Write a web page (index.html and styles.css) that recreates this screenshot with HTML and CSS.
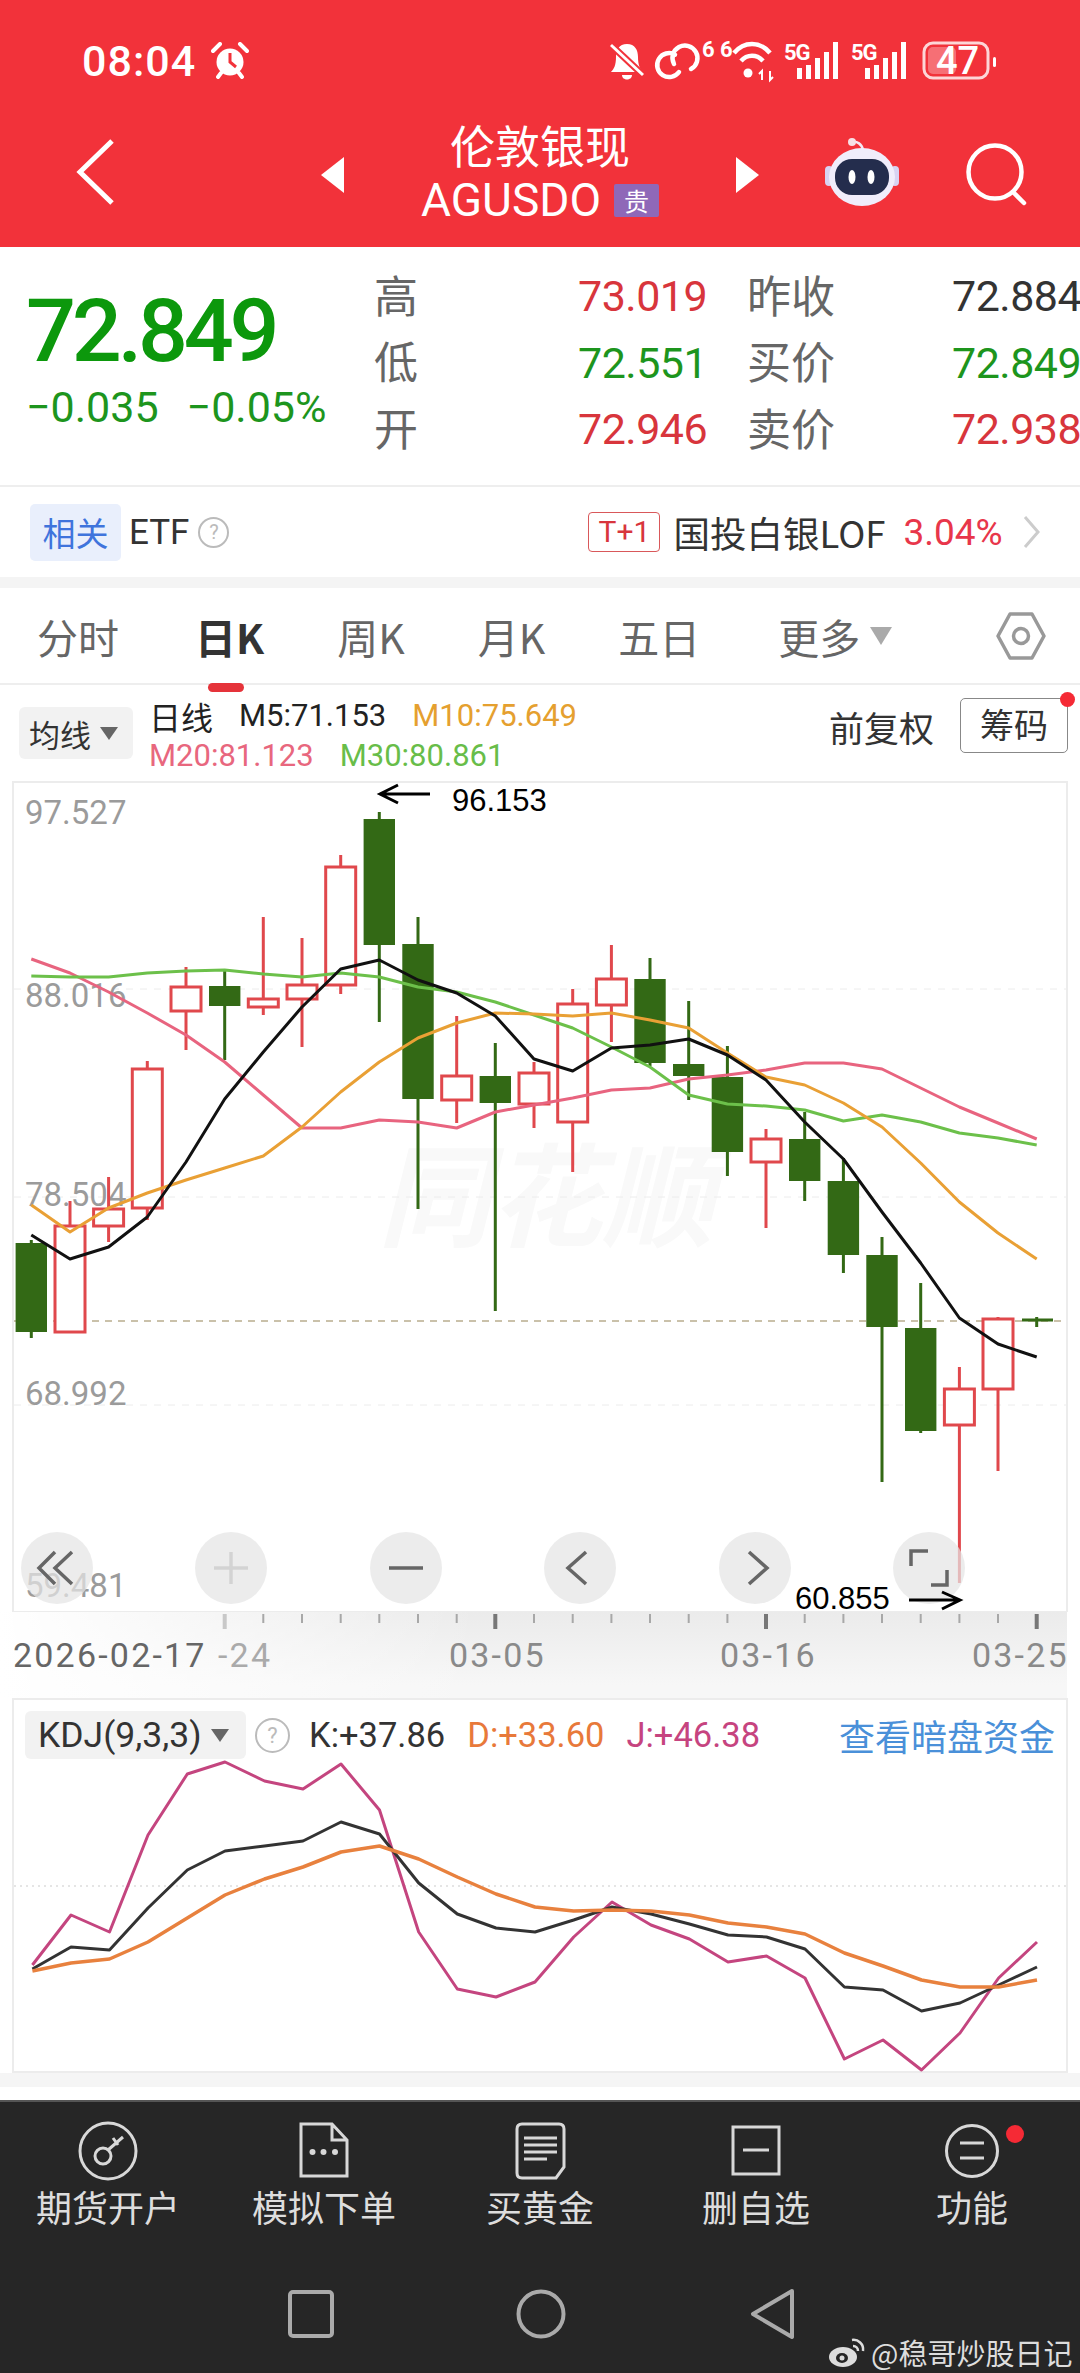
FILE: index.html
```html
<!DOCTYPE html>
<html lang="zh-CN">
<head>
    <meta charset="UTF-8">
    <meta name="viewport" content="width=device-width, initial-scale=1.0">
    <title>伦敦银现 AGUSDO</title>
    <link rel="stylesheet" href="styles.css">
</head>
<body>
    <header class="topbar">
        <div class="status">
            <div class="clock">
                <span class="time">08:04</span>
                <svg class="alarm" viewBox="0 0 38 38" width="38" height="38">
                    <circle cx="19" cy="20" r="13.5" fill="#fff"/>
                    <path d="M19 11V20L25 25" fill="none" stroke="#f2323a" stroke-width="3"/>
                    <path d="M2 9L9 2M36 9L29 2M7 35L10 31M31 35L28 31" stroke="#fff" stroke-width="4" stroke-linecap="round"/>
                </svg>
            </div>
            <svg class="status-icons" viewBox="605 38 395 46" width="395" height="46">
                <path d="M629 44C621 44 618 50 618 57C618 65 616 69 613 72H645C642 69 640 65 640 57C640 50 637 44 629 44ZM624 75H634C634 81 624 81 624 75Z" fill="#fff"/>
                <path d="M613 45L645 75" stroke="#f2323a" stroke-width="7"/>
                <path d="M613 45L645 75" stroke="#fff" stroke-width="3"/>
                <path d="M677 54.6A12 12 0 1 0 681 72M676 64A12.5 12.5 0 1 1 693 69" fill="none" stroke="#fff" stroke-width="4.5" stroke-linecap="round"/>
                <text class="tiny-six" x="704" y="57">6</text>
                <text class="tiny-six" x="722" y="57">6</text>
                <path d="M736 53C746 41 762 41 772 53M743 61C749 54 759 54 765 61" fill="none" stroke="#fff" stroke-width="4.5"/>
                <circle cx="750" cy="73" r="4.5" fill="#fff"/>
                <path d="M764 80V71L761 74M772 71V80L775 77" fill="none" stroke="#fff" stroke-width="2"/>
                <text class="five-g" x="786" y="60">5G</text>
                <path d="M799 68h5v11h-5zM808 65h5v14h-5zM817 58h5v21h-5zM826 52h5v27h-5zM835 42h5v37h-5z" fill="#fff"/>
                <text class="five-g" x="853" y="60">5G</text>
                <path d="M867 68h5v11h-5zM876 65h5v14h-5zM885 58h5v21h-5zM894 52h5v27h-5zM903 42h5v37h-5z" fill="#fff"/>
                <rect x="926" y="43" width="64" height="35" rx="9" fill="none" stroke="#fff" stroke-opacity="0.8" stroke-width="3"/>
                <rect x="930" y="47" width="28" height="27" rx="5" fill="#fff" fill-opacity="0.3"/>
                <text class="battery-num" x="938" y="74">47</text>
                <rect x="995" y="57" width="3" height="10" rx="1.5" fill="#fff"/>
            </svg>
        </div>
        <nav class="titlebar">
            <svg class="back" viewBox="0 0 44 70" width="44" height="70">
                <path d="M36 4L4 35L36 66" fill="none" stroke="#fff" stroke-width="5"/>
            </svg>
            <div class="switcher">
                <span class="tri-left"></span>
                <div class="product">
                    <div class="product-name">伦敦银现</div>
                    <div class="product-code">AGUSDO<span class="exchange">贵</span></div>
                </div>
                <span class="tri-right"></span>
            </div>
            <svg class="robot" viewBox="820 136 82 72" width="82" height="72">
                <path d="M851 142C856 141 861 144 862 150" fill="none" stroke="#f3e9f4" stroke-width="2.5"/>
                <circle cx="851" cy="142" r="4" fill="#f7dfe6"/>
                <rect x="824" y="166" width="8" height="20" rx="4" fill="#d8d2f2"/>
                <rect x="890" y="166" width="8" height="20" rx="4" fill="#d8d2f2"/>
                <ellipse cx="861" cy="177" rx="33" ry="29" fill="#f0edfb"/>
                <rect x="834" y="159" width="54" height="36" rx="17" fill="#242d4d"/>
                <ellipse cx="851" cy="177" rx="3.5" ry="7" fill="#fff"/>
                <ellipse cx="870" cy="177" rx="3.5" ry="7" fill="#fff"/>
            </svg>
            <svg class="search" viewBox="960 140 70 70" width="70" height="70">
                <circle cx="994" cy="172" r="26.5" fill="none" stroke="#fff" stroke-width="4.5"/>
                <path d="M1012 192L1023 203" stroke="#fff" stroke-width="4.5" stroke-linecap="round"/>
            </svg>
        </nav>
    </header>

    <section class="quote">
        <div class="last">
            <div class="last-price">72.849</div>
            <div class="last-change"><span>−0.035</span><span>−0.05%</span></div>
        </div>
        <div class="stats">
            <span class="stat-label">高</span><span class="stat-value red">73.019</span><span class="stat-label">昨收</span><span class="stat-value dark">72.884</span>
            <span class="stat-label">低</span><span class="stat-value green">72.551</span><span class="stat-label">买价</span><span class="stat-value green">72.849</span>
            <span class="stat-label">开</span><span class="stat-value red">72.946</span><span class="stat-label">卖价</span><span class="stat-value red">72.938</span>
        </div>
    </section>

    <section class="etf">
        <span class="etf-tag">相关</span>
        <span class="etf-title">ETF</span>
        <span class="help etf-help">?</span>
        <span class="t1">T+1</span>
        <span class="etf-name">国投白银LOF</span>
        <span class="etf-rate">3.04%</span>
        <svg class="etf-more" viewBox="0 0 18 34" width="18" height="34">
            <path d="M2 2L15 17L2 32" fill="none" stroke="#ccc" stroke-width="3"/>
        </svg>
    </section>

    <div class="gap"></div>

    <section class="tabs">
        <span class="tab tab-first">分时</span>
        <span class="tab tab-on">日K</span>
        <span class="tab">周K</span>
        <span class="tab">月K</span>
        <span class="tab">五日</span>
        <span class="tab tab-more">更多<i class="tab-arrow"></i></span>
        <svg class="tab-set" viewBox="0 0 50 48" width="50" height="48">
            <path d="M14 2H36L48 24L36 46H14L2 24Z" fill="none" stroke="#999" stroke-width="3.5" stroke-linejoin="round"/>
            <circle cx="25" cy="24" r="7.5" fill="none" stroke="#999" stroke-width="3.5"/>
        </svg>
    </section>

    <section class="legend">
        <div class="ma-select">均线<i class="small-arrow"></i></div>
        <div class="ma-values">
            <div class="ma-line"><span class="ma-name">日线</span><span class="m5">M5:71.153</span><span class="m10">M10:75.649</span></div>
            <div class="ma-line"><span class="m20">M20:81.123</span><span class="m30">M30:80.861</span></div>
        </div>
        <span class="adjust">前复权</span>
        <span class="chips">筹码<i class="dot chips-dot"></i></span>
    </section>

    <section class="chart">
        <svg class="plot" viewBox="0 781 1080 831" width="1080" height="831">
            <rect class="frame" x="13" y="782" width="1054" height="830"/>
            <text class="watermark" x="378" y="1238">同花顺</text>
            <path class="grid" d="M14 989H1066M14 1197H1066M14 1405H1066"/>
            <path class="price-line" d="M14 1321H1066"/>
            <text class="y-num" x="25" y="824">97.527</text>
            <text class="y-num" x="25" y="1007">88.016</text>
            <text class="y-num" x="25" y="1206">78.504</text>
            <text class="y-num" x="25" y="1405">68.992</text>
            <text class="y-num" x="25" y="1597">59.481</text>

            <path class="wick-dn" d="M31.3 1240V1338M224.7 969V1060M379.3 812V1022M418 917V1209M495.3 1043V1311M650 958V1066M688.7 1001V1100M727.4 1046V1176M804.7 1112V1201M843.4 1158V1273M882 1237V1482M920.7 1283V1433"/>
            <path class="wick-up" d="M70 1201V1226M108.6 1177V1242M147.3 1061V1220M186 967V1050M263.3 917V1015M302 938V1047M340.7 855V994M456.7 1016V1123M534 1062V1128M572.7 989V1172M611.4 945V1042M766 1129V1228M959.4 1367V1583M998 1317V1471"/>

            <rect class="dn" x="15.6" y="1243" width="31.4" height="89"/>
            <rect class="dn" x="209" y="986" width="31.4" height="20"/>
            <rect class="dn" x="363.6" y="819" width="31.4" height="126"/>
            <rect class="dn" x="402.3" y="944" width="31.4" height="155"/>
            <rect class="dn" x="479.6" y="1076" width="31.4" height="27"/>
            <rect class="dn" x="634.3" y="979" width="31.4" height="84"/>
            <rect class="dn" x="673" y="1064" width="31.4" height="12"/>
            <rect class="dn" x="711.7" y="1077" width="31.4" height="75"/>
            <rect class="dn" x="789" y="1139" width="31.4" height="42"/>
            <rect class="dn" x="827.7" y="1181" width="31.4" height="74"/>
            <rect class="dn" x="866.3" y="1255" width="31.4" height="72"/>
            <rect class="dn" x="905" y="1328" width="31.4" height="103"/>
            <path class="wick-dn thin" d="M1022 1320H1053M1036.7 1317V1327"/>

            <rect class="up" x="55" y="1226" width="30" height="106"/>
            <rect class="up" x="93.6" y="1209" width="30" height="17"/>
            <rect class="up" x="132.3" y="1069" width="30" height="139"/>
            <rect class="up" x="171" y="987" width="30" height="24"/>
            <rect class="up" x="248.3" y="999" width="30" height="8"/>
            <rect class="up" x="287" y="985" width="30" height="14"/>
            <rect class="up" x="325.7" y="867" width="30" height="118"/>
            <rect class="up" x="441.7" y="1076" width="30" height="24"/>
            <rect class="up" x="519" y="1073" width="30" height="31"/>
            <rect class="up" x="557.7" y="1004" width="30" height="118"/>
            <rect class="up" x="596.4" y="979" width="30" height="26"/>
            <rect class="up" x="751" y="1139" width="30" height="23"/>
            <rect class="up" x="944.4" y="1389" width="30" height="36"/>
            <rect class="up" x="983" y="1319" width="30" height="70"/>

            <polyline class="ma ma20" points="31.3,959 70,973 108.6,992 147.3,1013 186,1035 224.7,1062 263.3,1095 302,1128 340.7,1128 379.3,1120 418,1122 456.7,1128 495.3,1112 534,1105 572.7,1098 611.4,1090 650,1088 688.7,1079 727.4,1075 766,1070 804.7,1063 843.4,1063 882,1069 920.7,1088 959.4,1107 998,1123 1036.7,1139"/>
            <polyline class="ma ma30" points="31.3,976 70,977 108.6,977 147.3,973 186,971 224.7,970 263.3,974 302,977 340.7,973 379.3,977 418,987 456.7,992 495.3,1002 534,1015 572.7,1028 611.4,1047 650,1067 688.7,1095 727.4,1104 766,1106 804.7,1110 843.4,1121 882,1115 920.7,1122 959.4,1133 998,1138 1036.7,1145"/>
            <polyline class="ma ma10" points="31.3,1205 70,1232 108.6,1208 147.3,1193 186,1180 224.7,1168 263.3,1156 302,1127 340.7,1092 379.3,1062 418,1038 456.7,1023 495.3,1013 534,1014 572.7,1016 611.4,1013 650,1020 688.7,1028 727.4,1053 766,1077 804.7,1085 843.4,1103 882,1127 920.7,1163 959.4,1202 998,1233 1036.7,1259"/>
            <polyline class="ma ma5" points="31.3,1235 70,1259 108.6,1247 147.3,1217 186,1162 224.7,1099 263.3,1052 302,1007 340.7,969 379.3,960 418,980 456.7,993 495.3,1016 534,1059 572.7,1071 611.4,1048 650,1045 688.7,1039 727.4,1055 766,1080 804.7,1122 843.4,1159 882,1212 920.7,1263 959.4,1318 998,1344 1036.7,1357"/>
        </svg>

        <div class="zoom-bar">
            <span class="zoom-btn"><svg viewBox="-36 -36 72 72" width="72" height="72"><path class="zi" d="M-2 -16L-18 0L-2 16M15 -16L-2 0L15 16"/></svg></span>
            <span class="zoom-btn"><svg viewBox="-36 -36 72 72" width="72" height="72"><path class="zi zi-off" d="M-17 0H17M0 -16V16"/></svg></span>
            <span class="zoom-btn"><svg viewBox="-36 -36 72 72" width="72" height="72"><path class="zi" d="M-17 0H17"/></svg></span>
            <span class="zoom-btn"><svg viewBox="-36 -36 72 72" width="72" height="72"><path class="zi" d="M6 -16L-12 0L6 16"/></svg></span>
            <span class="zoom-btn"><svg viewBox="-36 -36 72 72" width="72" height="72"><path class="zi" d="M-6 -16L12 0L-6 16"/></svg></span>
            <span class="zoom-btn"><svg viewBox="-36 -36 72 72" width="72" height="72"><path class="zi" d="M-18 -2V-17H-1M2 17H18V2"/></svg></span>
        </div>

        <svg class="notes" viewBox="0 781 1080 860" width="1080" height="860">
            <path class="note-arrow" d="M430 794H381M398 785L380 794L398 803"/>
            <text class="note-num" x="452" y="811">96.153</text>
            <text class="note-num" x="795" y="1609">60.855</text>
            <path class="note-arrow" d="M909 1600H959M942 1592L960 1600L942 1609"/>
        </svg>
    </section>

    <section class="axis">
        <svg viewBox="0 1612 1080 86" width="1080" height="86">
            <path class="tick" d="M263.3 1614V1623M302 1614V1623M340.7 1614V1623M379.3 1614V1623M418 1614V1623M456.7 1614V1623M534 1614V1623M572.7 1614V1623M611.4 1614V1623M650 1614V1623M688.7 1614V1623M727.4 1614V1623M804.7 1614V1623M843.4 1614V1623M882 1614V1623M920.7 1614V1623M959.4 1614V1623M998 1614V1623"/>
            <path class="tick tick-big tick-faint" d="M224.7 1614V1629"/>
            <path class="tick tick-big" d="M495.3 1614V1629M766 1614V1629M1036.7 1614V1629"/>
            <text class="date date-first" x="13" y="1667">2026-02-17</text>
            <text class="date date-faint" x="218" y="1667">-24</text>
            <text class="date" x="449" y="1667">03-05</text>
            <text class="date" x="720" y="1667">03-16</text>
            <text class="date" x="972" y="1667">03-25</text>
        </svg>
    </section>

    <section class="kdj">
        <div class="kdj-head">
            <span class="kdj-select">KDJ(9,3,3)<i class="small-arrow"></i></span>
            <span class="help kdj-help">?</span>
            <span class="kdj-k">K:+37.86</span>
            <span class="kdj-d">D:+33.60</span>
            <span class="kdj-j">J:+46.38</span>
            <a class="kdj-link">查看暗盘资金</a>
        </div>
        <svg class="kdj-plot" viewBox="14 1760 1052 312" width="1052" height="312">
            <path class="kdj-grid" d="M14 1886H1066"/>
            <polyline class="kl line-j" points="32.4,1965 71,1915 109.5,1932 148,1835 187.3,1774 225,1762 264.5,1781 303,1789 341,1764 379.5,1810 418.7,1932 457.3,1989 496,1997 535,1982 573.7,1937 612,1902 651,1925 689.4,1939 728,1962 766.5,1956 805,1978 844.4,2059 883,2040 921.5,2070 960,2033 998.6,1978 1037,1942"/>
            <polyline class="kl line-k" points="32.4,1969 71,1947 109.5,1950 148,1908 187.3,1870 225,1851 264.5,1846 303,1841 341,1822 379.5,1834 418.7,1883 457.3,1914 496,1928 535,1932 573.7,1920 612,1907 651,1914 689.4,1924 728,1935 766.5,1937 805,1949 844.4,1987 883,1990 921.5,2011 960,2003 998.6,1985 1037,1967"/>
            <polyline class="kl line-d" points="32.4,1971 71,1963 109.5,1959 148,1942 187.3,1918 225,1895 264.5,1879 303,1867 341,1852 379.5,1846 418.7,1859 457.3,1877 496,1894 535,1907 573.7,1911 612,1910 651,1911 689.4,1915 728,1923 766.5,1927 805,1934 844.4,1953 883,1966 921.5,1980 960,1987 998.6,1987 1037,1980"/>
        </svg>
    </section>

    <div class="gap gap-low"></div>
    <div class="white-strip"></div>

    <footer class="bottom">
        <div class="actions">
            <div class="action">
                <svg viewBox="76 2120 64 64" width="64" height="64">
                    <circle class="ni" cx="108" cy="2151" r="28"/>
                    <circle class="ni" cx="103" cy="2156" r="8"/>
                    <path class="ni" d="M108 2150L123 2137M113 2138L118 2145"/>
                </svg>
                <span>期货开户</span>
            </div>
            <div class="action">
                <svg viewBox="292 2120 64 64" width="64" height="64">
                    <path class="ni" d="M301 2124H332L347 2140V2176H301ZM332 2124V2140H347"/>
                    <circle class="ni-dot" cx="312.5" cy="2152" r="3"/>
                    <circle class="ni-dot" cx="323.5" cy="2152" r="3"/>
                    <circle class="ni-dot" cx="335" cy="2152" r="3"/>
                </svg>
                <span>模拟下单</span>
            </div>
            <div class="action">
                <svg viewBox="507 2120 64 64" width="64" height="64">
                    <path class="ni" d="M521 2124H558Q563 2124 563 2129V2167L555 2178H521Q516 2178 516 2173V2129Q516 2124 521 2124Z"/>
                    <path class="ni" d="M523 2138H556M523 2145H556M523 2152H556M523 2159H546"/>
                </svg>
                <span>买黄金</span>
            </div>
            <div class="action">
                <svg viewBox="723 2120 64 64" width="64" height="64">
                    <rect class="ni" x="732" y="2127" width="46" height="47"/>
                    <path class="ni" d="M742 2150H768"/>
                </svg>
                <span>删自选</span>
            </div>
            <div class="action">
                <svg viewBox="939 2120 64 64" width="64" height="64">
                    <circle class="ni" cx="971" cy="2151" r="25.5"/>
                    <path class="ni" d="M959 2143H983M959 2158H983"/>
                </svg>
                <span>功能</span>
                <i class="dot action-dot"></i>
            </div>
        </div>
        <div class="sysnav">
            <svg class="sys-square" viewBox="0 0 46 48" width="46" height="48"><rect x="2" y="2" width="42" height="44" rx="3"/></svg>
            <svg class="sys-circle" viewBox="0 0 50 52" width="50" height="52"><circle cx="25" cy="26" r="22.5"/></svg>
            <svg class="sys-back" viewBox="0 0 46 52" width="46" height="52"><path d="M43 3L4 26L43 49Z"/></svg>
        </div>
        <div class="mark">
            <svg viewBox="0 0 38 32" width="38" height="32">
                <ellipse cx="15" cy="21" rx="14" ry="10" fill="#ddd"/>
                <ellipse cx="14" cy="22" rx="6" ry="5" fill="#262626"/>
                <circle cx="14" cy="22" r="2.5" fill="#ddd"/>
                <path d="M24 4C30 3 36 8 35 15M25 10C28 10 30 12 30 15" fill="none" stroke="#ddd" stroke-width="2.5"/>
            </svg>
            <span>@稳哥炒股日记</span>
        </div>
    </footer>
</body>
</html>
```
FILE: styles.css
```css
* {
    box-sizing: border-box;
}
body {
    margin: 0;
    width: 1080px;
    height: 2373px;
    overflow: hidden;
    background: #fff;
    font-family: "Noto Sans CJK SC", "Noto Sans", sans-serif;
    color: #333;
}
svg {
    display: block;
}
i {
    font-style: normal;
}

/* top red bar */
.topbar {
    height: 247px;
    background: #f2323a;
    color: #fff;
}
.status {
    height: 100px;
    display: flex;
    justify-content: space-between;
    align-items: flex-start;
    padding: 38px 82px 0 82px;
}
.clock {
    display: flex;
    align-items: center;
    gap: 15px;
    height: 46px;
}
.time {
    font-family: Roboto, sans-serif;
    font-size: 43px;
    font-weight: 500;
    line-height: 46px;
    letter-spacing: 1px;
}
.tiny-six {
    font: 700 22px Roboto, sans-serif;
    fill: #fff;
}
.five-g {
    font: 700 22px Roboto, sans-serif;
    letter-spacing: -1px;
    fill: #fff;
}
.battery-num {
    font: 500 38px Roboto, sans-serif;
    fill: #fff;
}
.titlebar {
    height: 147px;
    display: flex;
    align-items: flex-start;
    padding-left: 76px;
}
.back {
    margin-top: 37px;
}
.switcher {
    display: flex;
    align-items: flex-start;
    margin-left: 201px;
    width: 438px;
}
.tri-left, .tri-right {
    width: 0;
    height: 0;
    margin-top: 57px;
    border-top: 18px solid transparent;
    border-bottom: 18px solid transparent;
}
.tri-left {
    border-right: 23px solid #fff;
}
.tri-right {
    border-left: 23px solid #fff;
}
.product {
    flex: 1;
    text-align: center;
    padding-top: 18px;
}
.product-name {
    font-size: 45px;
    line-height: 54px;
}
.product-code {
    margin-top: 11px;
    display: flex;
    justify-content: center;
    align-items: center;
    gap: 13px;
    font-family: Roboto, sans-serif;
    font-size: 46px;
    line-height: 34px;
}
.exchange {
    width: 45px;
    height: 33px;
    background: #8f68b8;
    border-radius: 2px;
    text-align: center;
    font-family: "Noto Sans CJK SC", sans-serif;
    font-size: 25px;
    line-height: 33px;
}
.robot {
    margin: 36px 0 0 62px;
}
.search {
    margin: 40px 0 0 58px;
}

/* price block */
.quote {
    height: 240px;
    display: flex;
    border-bottom: 2px solid #eee;
}
.last {
    width: 374px;
    padding: 39px 0 0 26px;
}
.last-price {
    font-family: Roboto, sans-serif;
    font-size: 88px;
    font-weight: 500;
    line-height: 90px;
    letter-spacing: -4.2px;
    color: #0c980c;
}
.last-change {
    margin-top: 6px;
    display: flex;
    gap: 28px;
    font-family: Roboto, sans-serif;
    font-size: 43px;
    line-height: 50px;
    color: #1d951d;
    white-space: nowrap;
}
.stats {
    flex: 1;
    display: grid;
    grid-template-columns: 204px 169px 205px 128px;
    grid-auto-rows: 66.5px;
    align-items: center;
    padding-top: 16px;
}
.stat-label {
    font-size: 44px;
    line-height: 50px;
    padding-bottom: 5px;
    color: #666;
}
.stat-value {
    font-family: Roboto, sans-serif;
    font-size: 43px;
    letter-spacing: -0.5px;
    line-height: 50px;
    white-space: nowrap;
}
.red {
    color: #d8353c;
}
.green {
    color: #1d951d;
}
.dark {
    color: #333;
}

/* related etf row */
.etf {
    height: 90px;
    display: flex;
    align-items: center;
    padding-left: 30px;
}
.etf-tag {
    width: 91px;
    height: 57px;
    border-radius: 5px;
    background: #e9effc;
    color: #3f74dc;
    font-size: 33px;
    line-height: 57px;
    text-align: center;
}
.etf-title {
    margin-left: 8px;
    font-family: Roboto, sans-serif;
    font-size: 35px;
}
.help {
    display: inline-block;
    border: 2px solid #bbb;
    border-radius: 50%;
    color: #bbb;
    text-align: center;
    font-family: Roboto, sans-serif;
}
.etf-help {
    width: 31px;
    height: 31px;
    margin-left: 9px;
    font-size: 20px;
    line-height: 27px;
}
.t1 {
    width: 72px;
    height: 40px;
    margin-left: 359px;
    border: 1.5px solid #d9585a;
    border-radius: 4px;
    color: #d8353c;
    text-align: center;
    font-family: Roboto, sans-serif;
    font-size: 30px;
    line-height: 37px;
}
.etf-name {
    margin-left: 13px;
    font-size: 36.5px;
}
.etf-rate {
    margin-left: 18px;
    font-family: Roboto, sans-serif;
    font-size: 37px;
    color: #e8364a;
}
.etf-more {
    margin-left: 20px;
}

.gap {
    height: 11px;
    background: #f4f4f4;
}
.gap-low {
    height: 14px;
    background: #f5f5f5;
}
.white-strip {
    height: 13px;
}

/* period tabs */
.tabs {
    height: 97px;
    display: flex;
    align-items: center;
    gap: 73px;
    padding: 0 0 0 37px;
    border-bottom: 2px solid #eee;
    position: relative;
}
.tab {
    font-size: 41px;
    color: #666;
    white-space: nowrap;
    display: flex;
    align-items: center;
}
.tab-first {
    margin-right: 3px;
}
.tab-more {
    margin-left: 5px;
}
.tab-on {
    font-weight: 700;
    color: #333;
    position: relative;
}
.tab-on::after {
    content: "";
    position: absolute;
    left: 13px;
    bottom: -26px;
    width: 36px;
    height: 9px;
    border-radius: 5px;
    background: #e5333a;
}
.tab-arrow {
    margin: 0 0 0 10px;
    border-top: 18px solid #aaa;
    border-left: 11px solid transparent;
    border-right: 11px solid transparent;
}
.tab-set {
    margin-left: auto;
    margin-right: 34px;
}

/* ma legend */
.legend {
    height: 96px;
    display: flex;
    position: relative;
}
.ma-select {
    width: 114px;
    height: 52px;
    margin: 22px 0 0 19px;
    padding-left: 10px;
    display: flex;
    align-items: center;
    background: #f2f2f2;
    border-radius: 6px;
    font-size: 31px;
}
.small-arrow {
    margin-left: 9px;
    border-top: 13px solid #666;
    border-left: 9px solid transparent;
    border-right: 9px solid transparent;
}
.ma-values {
    margin: 11px 0 0 16px;
    font-family: Roboto, sans-serif;
    font-size: 31px;
    line-height: 40px;
}
.ma-line {
    display: flex;
    gap: 26px;
    color: #222;
}
.ma-name {
    font-family: "Noto Sans CJK SC", sans-serif;
    font-size: 32px;
}
.m10 {
    color: #e5a02f;
}
.m20 {
    color: #e8677e;
}
.m30 {
    color: #68bd49;
}
.adjust {
    margin: 19px 0 0 auto;
    font-size: 35px;
    line-height: 46px;
}
.chips {
    width: 108px;
    height: 55px;
    margin: 13px 12px 0 26px;
    border: 1.5px solid #888;
    border-radius: 5px;
    text-align: center;
    font-size: 34px;
    line-height: 50px;
    position: relative;
}
.dot {
    display: block;
    position: absolute;
    border-radius: 50%;
    background: #f52a35;
}
.chips-dot {
    width: 15px;
    height: 15px;
    top: -7px;
    right: -8px;
}

/* candle chart */
.chart {
    position: relative;
    height: 831px;
}
.frame {
    fill: none;
    stroke: #ececec;
    stroke-width: 2;
}
.watermark {
    font-size: 112px;
    font-weight: 700;
    font-style: italic;
    fill: #f9f9f9;
}
.grid {
    fill: none;
    stroke: #ececec;
    stroke-width: 1;
    stroke-dasharray: 7 7;
}
.price-line {
    stroke: #b9ad8f;
    stroke-width: 1.5;
    stroke-dasharray: 7 6;
}
.y-num {
    font-family: Roboto, sans-serif;
    font-size: 33px;
    fill: #9b9b9b;
}
.wick-dn {
    fill: none;
    stroke: #336915;
    stroke-width: 3;
}
.wick-up {
    fill: none;
    stroke: #e0484c;
    stroke-width: 3;
}
.dn {
    fill: #336915;
}
.up {
    fill: #fff;
    stroke: #e0484c;
    stroke-width: 3;
}
.ma {
    fill: none;
    stroke-width: 3;
    stroke-linejoin: round;
}
.ma5 {
    stroke: #111;
}
.ma10 {
    stroke: #e9a035;
}
.ma20 {
    stroke: #e8647f;
}
.ma30 {
    stroke: #6cc04a;
}
.zoom-bar {
    position: absolute;
    left: 21px;
    top: 751px;
    display: flex;
    gap: 102.4px;
}
.zoom-btn {
    width: 72px;
    height: 72px;
    border-radius: 50%;
    background: rgba(228, 228, 228, 0.72);
}
.zi {
    fill: none;
    stroke: #666;
    stroke-width: 3.5;
}
.zi-off {
    stroke: #d3d3d3;
}
.notes {
    position: absolute;
    left: 0;
    top: 0;
    z-index: 2;
}
.note-arrow {
    fill: none;
    stroke: #000;
    stroke-width: 3;
}
.note-num {
    font-family: "Liberation Sans", sans-serif;
    font-size: 31px;
    fill: #000;
}

/* date axis */
.axis {
    height: 86px;
    background:
        linear-gradient(90deg, #fff 0, rgba(255, 255, 255, 0) 45%),
        linear-gradient(180deg, #ebebeb 0, #f7f7f7 85%);
    border-right: 13px solid #fff;
}
.axis svg {
    margin-right: -13px;
}
.tick {
    stroke: #a8a8a8;
    stroke-width: 2;
}
.tick-big {
    stroke: #777;
    stroke-width: 4;
}
.tick-faint {
    stroke: #c8c8c8;
}
.date {
    font-family: Roboto, sans-serif;
    font-size: 34px;
    letter-spacing: 2.2px;
    fill: #8a8a8a;
}
.date-first {
    fill: #666;
}
.date-faint {
    fill: #aaa;
}

/* kdj panel */
.kdj {
    height: 375px;
    margin: 0 12px;
    width: 1056px;
    border: 2px solid #ececec;
}
.kdj-head {
    height: 60px;
    display: flex;
    align-items: center;
    padding: 10px 0 0 11px;
    font-family: Roboto, sans-serif;
    font-size: 34.5px;
    white-space: nowrap;
}
.kdj-select {
    width: 221px;
    height: 48px;
    padding-left: 13px;
    display: flex;
    align-items: center;
    border-radius: 6px;
    background: #f2f2f2;
    font-size: 35.5px;
}
.kdj-help {
    width: 35px;
    height: 35px;
    margin-left: 9px;
    font-size: 22px;
    line-height: 31px;
}
.kdj-k {
    margin-left: 19px;
}
.kdj-d {
    margin-left: 22px;
    color: #e8793a;
}
.kdj-j {
    margin-left: 22px;
    color: #c6447f;
}
.kdj-link {
    margin-left: auto;
    margin-right: 11px;
    font-family: "Noto Sans CJK SC", sans-serif;
    font-size: 36px;
    color: #4a90d9;
}
.kdj-grid {
    stroke: #ddd;
    stroke-width: 1.5;
    stroke-dasharray: 2 4;
}
.kl {
    fill: none;
    stroke-linejoin: round;
}
.line-j {
    stroke: #c4457f;
    stroke-width: 3;
}
.line-k {
    stroke: #333;
    stroke-width: 3;
}
.line-d {
    stroke: #e8813e;
    stroke-width: 3.5;
}

/* bottom dark bar */
.bottom {
    height: 273px;
    background: #262626;
    border-top: 2px solid #555;
    position: relative;
}
.actions {
    display: grid;
    grid-template-columns: repeat(5, 216px);
    padding-top: 18px;
}
.action {
    position: relative;
    display: flex;
    flex-direction: column;
    align-items: center;
    color: #ddd;
    font-size: 36px;
    line-height: 48px;
}
.action span {
    margin-top: -2px;
}
.ni {
    fill: none;
    stroke: #d8d8d8;
    stroke-width: 3;
}
.ni-dot {
    fill: #d8d8d8;
}
.action-dot {
    width: 18px;
    height: 18px;
    top: 5px;
    left: 142px;
}
.sysnav {
    margin-top: 58px;
    display: flex;
    justify-content: flex-start;
    align-items: center;
    padding-left: 288px;
}
.sysnav rect, .sysnav circle, .sysnav path {
    fill: none;
    stroke: #aaa;
    stroke-width: 4;
    stroke-linejoin: round;
}
.sys-circle {
    margin-left: 182px;
}
.sys-back {
    margin-left: 183px;
}
.mark {
    position: absolute;
    left: 828px;
    top: 229px;
    display: flex;
    align-items: center;
    gap: 5px;
    color: #ddd;
    font-size: 29px;
    white-space: nowrap;
}
```
